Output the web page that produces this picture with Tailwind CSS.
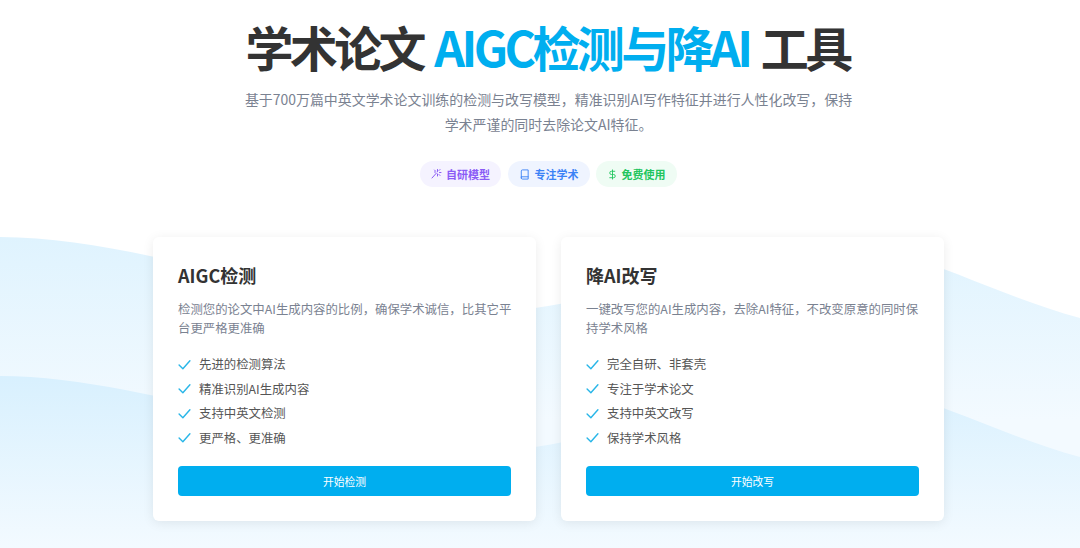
<!DOCTYPE html>
<html lang="zh-CN">
<head>
    <meta charset="UTF-8">
    <meta name="viewport" content="width=device-width, initial-scale=1.0">
    <title>学术论文 AIGC检测与降AI 工具</title>
    <script src="https://cdn.jsdelivr.net/npm/@tailwindcss/browser@4"></script>
</head>
<body class="bg-white text-[#333] font-['Noto_Sans_CJK_SC','Noto_Sans',sans-serif]">
<div class="relative w-[1080px] h-[548px] overflow-hidden">

    <!-- Background waves -->
    <svg class="absolute inset-0" width="1080" height="548" viewBox="0 0 1080 548" fill="none">
        <defs>
            <linearGradient id="waveBack" x1="0" y1="237" x2="0" y2="420" gradientUnits="userSpaceOnUse">
                <stop offset="0" stop-color="#dff3fe"/>
                <stop offset="1" stop-color="#f3faff"/>
            </linearGradient>
            <linearGradient id="waveFront" x1="0" y1="376" x2="0" y2="548" gradientUnits="userSpaceOnUse">
                <stop offset="0" stop-color="#d8f0fe"/>
                <stop offset="1" stop-color="#f3faff"/>
            </linearGradient>
        </defs>
        <path d="M0 237 C110 237 230 280 350 296 C440 308 490 314 535 308 C640 294 720 240 820 240 C900 240 990 294 1080 318 L1080 548 L0 548 Z" fill="url(#waveBack)"/>
        <path d="M0 376 C110 376 230 419 350 435 C440 447 490 453 535 447 C640 433 720 379 820 379 C900 379 990 433 1080 457 L1080 548 L0 548 Z" fill="url(#waveFront)"/>
    </svg>

    <div class="relative flex flex-col items-center pl-[17px]">
        <!-- Header -->
        <h1 class="mt-[11px] h-[70px] pr-[2px] text-[48px] leading-[70px] font-bold tracking-[-3.6px] [word-spacing:4px] whitespace-pre">学术论文 <span class="text-[#00aeef]">AIGC检测与降AI</span> 工具</h1>
        <p class="mt-[6px] w-[620px] text-center text-[13.95px] leading-[25px] text-[#7a8291]">基于700万篇中英文学术论文训练的检测与改写模型，精准识别AI写作特征并进行人性化改写，保持<br>学术严谨的同时去除论文AI特征。</p>

        <div class="mt-[24px] flex gap-[6.5px]">
            <span class="flex items-center gap-[4px] h-[26px] pl-[10px] pr-[11px] rounded-full bg-[#f5f3ff] text-[#8b5cf6] text-[11px] font-bold">
                <svg class="w-[12px] h-[12px]" viewBox="0 0 24 24" fill="none" stroke="currentColor" stroke-width="2" stroke-linecap="round"><path d="M4 20 13 10M15 3v4M15 12v4M9 8h2M19 9h3M18 5l2-2M18 13l2 2M9 4l2 2"/></svg>
                自研模型
            </span>
            <span class="flex items-center gap-[5px] h-[26px] px-[11px] rounded-full bg-[#eff4ff] text-[#3b82f6] text-[11px] font-bold">
                <svg class="w-[11px] h-[11px]" viewBox="0 0 24 24" fill="none" stroke="currentColor" stroke-width="2" stroke-linecap="round" stroke-linejoin="round"><path d="M5 19.5V4.5A2.5 2.5 0 0 1 7.5 2H20v20H7.5A2.5 2.5 0 0 1 5 19.5zM5 17h15"/></svg>
                专注学术
            </span>
            <span class="flex items-center gap-[4px] h-[26px] pl-[10.5px] pr-[11.5px] rounded-full bg-[#effcf4] text-[#22c55e] text-[11px] font-bold">
                <svg class="w-[11px] h-[11px]" viewBox="0 0 24 24" fill="none" stroke="currentColor" stroke-width="2" stroke-linecap="round" stroke-linejoin="round"><path d="M12 2v20M17 5H9.5a3.5 3.5 0 0 0 0 7h5a3.5 3.5 0 0 1 0 7H6"/></svg>
                免费使用
            </span>
        </div>

        <!-- Cards -->
        <div class="mt-[50px] flex gap-[25px]">
            <div class="w-[383px] h-[284px] rounded-[6px] bg-white p-[25px] shadow-[0_2px_12px_rgba(0,0,0,0.08)]">
                <h2 class="text-[18px] leading-[26px] font-bold">AIGC检测</h2>
                <p class="mt-[12px] -mr-[2px] text-[12.4px] leading-[18.5px] text-[#7a8291]">检测您的论文中AI生成内容的比例，确保学术诚信，比其它平台更严格更准确</p>
                <ul class="mt-[15px] text-[12.4px] leading-[24.5px] text-[#555]">
                    <li class="flex items-center gap-[8px]">
                        <svg class="w-[13px] h-[13px] text-[#29b6e8]" viewBox="0 0 24 24" fill="none" stroke="currentColor" stroke-width="2.6" stroke-linecap="round" stroke-linejoin="round"><path d="M2 13l7 7L22 5"/></svg>
                        先进的检测算法
                    </li>
                    <li class="flex items-center gap-[8px]">
                        <svg class="w-[13px] h-[13px] text-[#29b6e8]" viewBox="0 0 24 24" fill="none" stroke="currentColor" stroke-width="2.6" stroke-linecap="round" stroke-linejoin="round"><path d="M2 13l7 7L22 5"/></svg>
                        精准识别AI生成内容
                    </li>
                    <li class="flex items-center gap-[8px]">
                        <svg class="w-[13px] h-[13px] text-[#29b6e8]" viewBox="0 0 24 24" fill="none" stroke="currentColor" stroke-width="2.6" stroke-linecap="round" stroke-linejoin="round"><path d="M2 13l7 7L22 5"/></svg>
                        支持中英文检测
                    </li>
                    <li class="flex items-center gap-[8px]">
                        <svg class="w-[13px] h-[13px] text-[#29b6e8]" viewBox="0 0 24 24" fill="none" stroke="currentColor" stroke-width="2.6" stroke-linecap="round" stroke-linejoin="round"><path d="M2 13l7 7L22 5"/></svg>
                        更严格、更准确
                    </li>
                </ul>
                <button class="mt-[16px] w-full h-[30px] rounded-[4px] bg-[#00aeef] text-white text-[10.8px]">开始检测</button>
            </div>

            <div class="w-[383px] h-[284px] rounded-[6px] bg-white p-[25px] shadow-[0_2px_12px_rgba(0,0,0,0.08)]">
                <h2 class="text-[18px] leading-[26px] font-bold">降AI改写</h2>
                <p class="mt-[12px] -mr-[2px] text-[12.4px] leading-[18.5px] text-[#7a8291]">一键改写您的AI生成内容，去除AI特征，不改变原意的同时保持学术风格</p>
                <ul class="mt-[15px] text-[12.4px] leading-[24.5px] text-[#555]">
                    <li class="flex items-center gap-[8px]">
                        <svg class="w-[13px] h-[13px] text-[#29b6e8]" viewBox="0 0 24 24" fill="none" stroke="currentColor" stroke-width="2.6" stroke-linecap="round" stroke-linejoin="round"><path d="M2 13l7 7L22 5"/></svg>
                        完全自研、非套壳
                    </li>
                    <li class="flex items-center gap-[8px]">
                        <svg class="w-[13px] h-[13px] text-[#29b6e8]" viewBox="0 0 24 24" fill="none" stroke="currentColor" stroke-width="2.6" stroke-linecap="round" stroke-linejoin="round"><path d="M2 13l7 7L22 5"/></svg>
                        专注于学术论文
                    </li>
                    <li class="flex items-center gap-[8px]">
                        <svg class="w-[13px] h-[13px] text-[#29b6e8]" viewBox="0 0 24 24" fill="none" stroke="currentColor" stroke-width="2.6" stroke-linecap="round" stroke-linejoin="round"><path d="M2 13l7 7L22 5"/></svg>
                        支持中英文改写
                    </li>
                    <li class="flex items-center gap-[8px]">
                        <svg class="w-[13px] h-[13px] text-[#29b6e8]" viewBox="0 0 24 24" fill="none" stroke="currentColor" stroke-width="2.6" stroke-linecap="round" stroke-linejoin="round"><path d="M2 13l7 7L22 5"/></svg>
                        保持学术风格
                    </li>
                </ul>
                <button class="mt-[16px] w-full h-[30px] rounded-[4px] bg-[#00aeef] text-white text-[10.8px]">开始改写</button>
            </div>
        </div>
    </div>
</div>
</body>
</html>
